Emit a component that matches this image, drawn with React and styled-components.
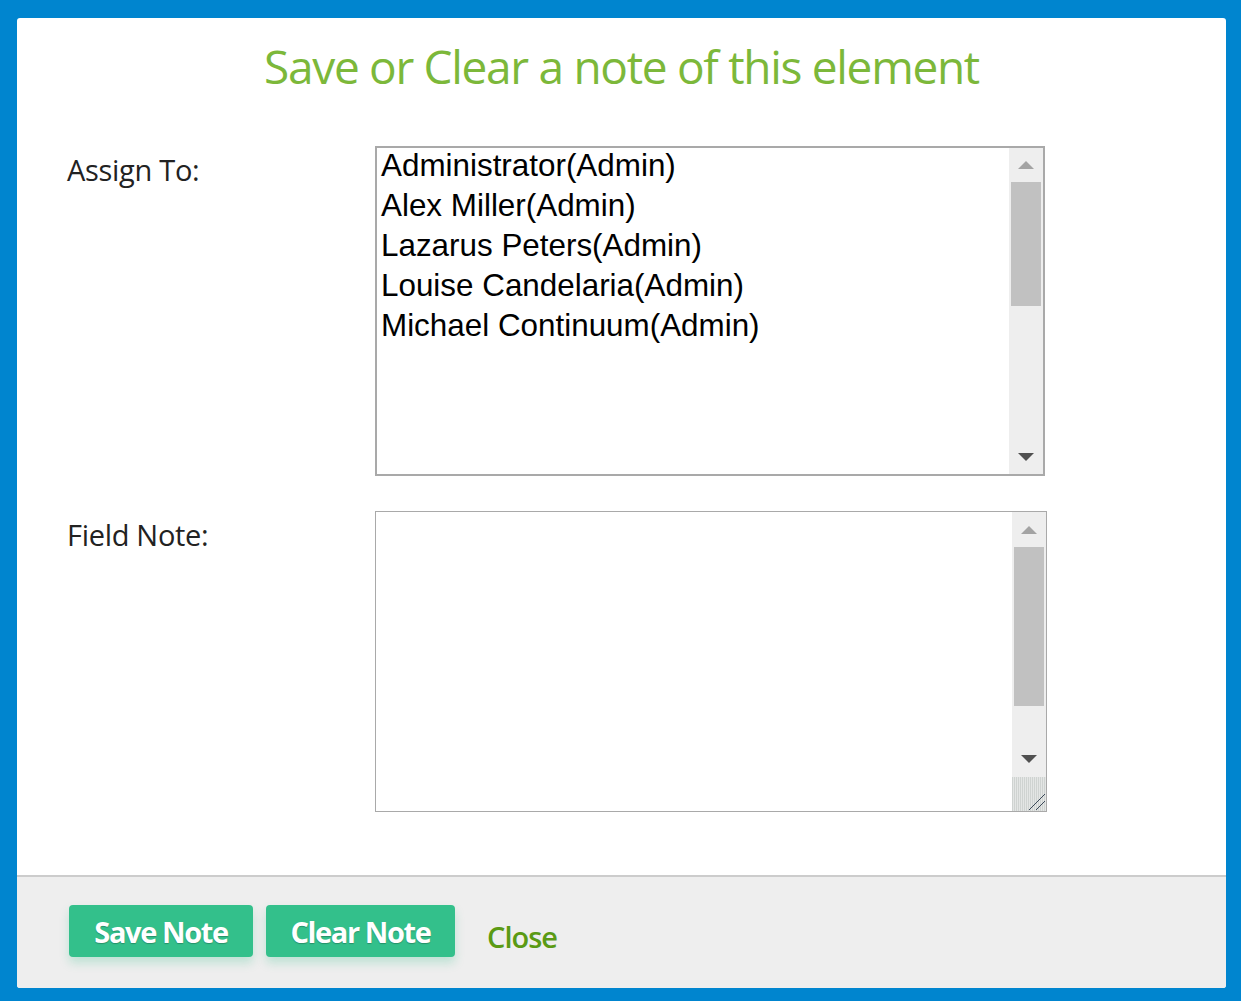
import React from "react";
import styled, { createGlobalStyle } from "styled-components";

const Global = createGlobalStyle`
  html, body { margin: 0; padding: 0; }
  body {
    background: #0085cf;
    padding: 18px 15px 13px 17px;
    font-family: "Open Sans", "Noto Sans", sans-serif;
  }
`;

const Panel = styled.div`
  width: 1209px;
  height: 970px;
  background: #ffffff;
  border-radius: 3px;
  display: flex;
  flex-direction: column;
  overflow: hidden;
`;

const Body = styled.div`
  flex: 1;
  padding: 0 50px;
`;

const Title = styled.h1`
  margin: 0;
  padding-top: 20px;
  height: 107px;
  box-sizing: border-box;
  text-align: center;
  color: #7cb83a;
  font-family: "Open Sans", "Noto Sans", sans-serif;
  font-weight: 500;
  font-size: 46px;
  line-height: 56px;
  letter-spacing: -1.3px;
`;

const Row = styled.div`
  display: grid;
  grid-template-columns: 308px ${(p) => p.$fieldWidth}px;
  align-items: start;
  margin-top: ${(p) => p.$top}px;
`;

const Label = styled.label`
  color: #222;
  font-family: "Open Sans", "Noto Sans", sans-serif;
  font-weight: 500;
  font-size: 29px;
  line-height: 40px;
  letter-spacing: -0.3px;
  padding-top: ${(p) => p.$pad}px;
`;

const Box = styled.div`
  display: flex;
  height: ${(p) => p.$height}px;
  border: ${(p) => p.$border}px solid #a9a9a9;
  background: #fff;
  box-sizing: border-box;
`;

const Options = styled.div`
  flex: 1;
  padding: 2px 0 0 4px;
`;

const Option = styled.div`
  font-family: "Liberation Sans", Arial, sans-serif;
  font-size: 31.4px;
  line-height: 32px;
  padding-bottom: 8px;
  color: #000;
  white-space: nowrap;
`;

const NoteArea = styled.div`
  flex: 1;
`;

const Scrollbar = styled.div`
  width: 34px;
  background: #eeeeee;
  display: flex;
  flex-direction: column;
  align-items: center;
`;

const ArrowSlot = styled.div`
  height: ${(p) => p.$h}px;
  width: 100%;
  display: flex;
  align-items: center;
  justify-content: center;
`;

const Arrow = styled.div`
  width: 0;
  height: 0;
  border-left: 8px solid transparent;
  border-right: 8px solid transparent;
  ${(p) =>
    p.$up
      ? `border-bottom: 8px solid #a3a3a3;`
      : `border-top: 8px solid #505050;`}
`;

const Thumb = styled.div`
  width: 30px;
  height: ${(p) => p.$h}px;
  background: #c1c1c1;
`;

const Spacer = styled.div`
  flex: 1;
`;

const Grip = styled.div`
  width: 34px;
  height: 34px;
  background: repeating-linear-gradient(
    90deg,
    #cfd3d1 0px,
    #cfd3d1 1px,
    #e4e6e5 1px,
    #e4e6e5 2px
  );
  display: flex;
  align-items: flex-end;
  justify-content: flex-end;
`;

const Footer = styled.div`
  height: 113px;
  box-sizing: border-box;
  background: #eeeeee;
  border-top: 2px solid #cccccc;
  display: flex;
  align-items: flex-start;
  padding: 28px 0 0 52px;
  gap: 13px;
`;

const Button = styled.button`
  height: 52px;
  width: ${(p) => p.$w}px;
  border: none;
  border-radius: 4px;
  background: #33c08b;
  color: #fff;
  font-family: "Open Sans", "Noto Sans", sans-serif;
  font-weight: 700;
  font-size: 29px;
  letter-spacing: -1.4px;
  text-shadow: 0 1px 1px rgba(0, 0, 0, 0.25);
  box-shadow: 0 6px 10px rgba(51, 192, 139, 0.25);
  padding: 0;
  cursor: pointer;
`;

const CloseLink = styled.a`
  margin-left: 19px;
  margin-top: 12px;
  color: #5a9a14;
  font-family: "Open Sans", "Noto Sans", sans-serif;
  font-weight: 600;
  font-size: 29px;
  line-height: 40px;
  letter-spacing: -1px;
  text-decoration: none;
  cursor: pointer;
`;

const users = [
  "Administrator(Admin)",
  "Alex Miller(Admin)",
  "Lazarus Peters(Admin)",
  "Louise Candelaria(Admin)",
  "Michael Continuum(Admin)",
];

function FakeScrollbar({ upH, thumbH, downH, grip }) {
  return (
    <Scrollbar>
      <ArrowSlot $h={upH}>
        <Arrow $up />
      </ArrowSlot>
      <Thumb $h={thumbH} />
      <Spacer />
      <ArrowSlot $h={downH}>
        <Arrow />
      </ArrowSlot>
      {grip && (
        <Grip>
          <svg width="20" height="20" viewBox="0 0 20 20">
            <line x1="3" y1="19" x2="19" y2="3" stroke="#3c4a5a" strokeWidth="1" />
            <line x1="10" y1="19" x2="19" y2="10" stroke="#3c4a5a" strokeWidth="1" />
          </svg>
        </Grip>
      )}
    </Scrollbar>
  );
}

export default function App() {
  return (
    <>
      <Global />
      <Panel>
        <Body>
          <Title>Save or Clear a note of this element</Title>
          <Row $fieldWidth={670} $top={21}>
            <Label $pad={4}>Assign To:</Label>
            <Box $height={330} $border={2}>
              <Options>
                {users.map((u) => (
                  <Option key={u}>{u}</Option>
                ))}
              </Options>
              <FakeScrollbar upH={34} thumbH={124} downH={34} />
            </Box>
          </Row>
          <Row $fieldWidth={672} $top={35}>
            <Label $pad={4}>Field Note:</Label>
            <Box $height={301} $border={1}>
              <NoteArea />
              <FakeScrollbar upH={35} thumbH={159} downH={36} grip />
            </Box>
          </Row>
        </Body>
        <Footer>
          <Button $w={184}>Save Note</Button>
          <Button $w={189}>Clear Note</Button>
          <CloseLink>Close</CloseLink>
        </Footer>
      </Panel>
    </>
  );
}
